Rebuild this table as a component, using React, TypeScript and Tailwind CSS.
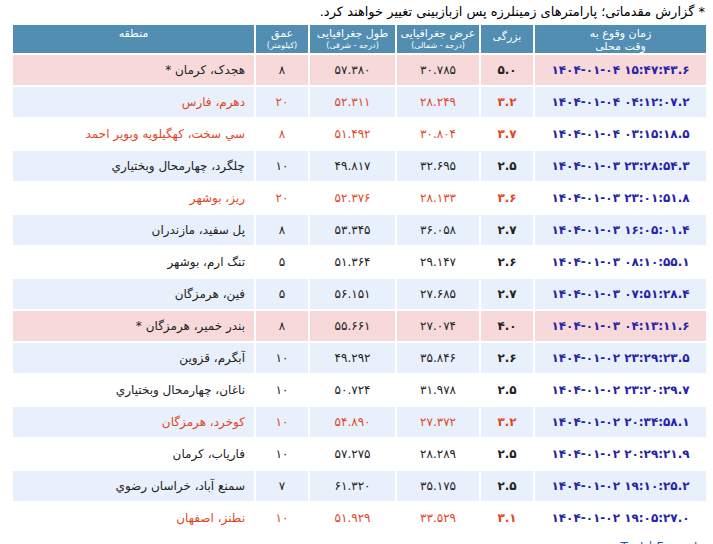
import React from 'react'

/* ردیف‌های جدول زمین‌لرزه‌ها */
type Quake = {
  region: string
  depth: string
  lon: string
  lat: string
  mag: string
  time: string
}

const QUAKES: Quake[] = [
  { region: 'هجدک، کرمان *', depth: '۸', lon: '۵۷.۳۸۰', lat: '۳۰.۷۸۵', mag: '۵.۰', time: '۱۴۰۴-۰۱-۰۴ ۱۵:۴۷:۴۳.۶' },
  { region: 'دهرم، فارس', depth: '۲۰', lon: '۵۲.۳۱۱', lat: '۲۸.۲۴۹', mag: '۳.۲', time: '۱۴۰۴-۰۱-۰۴ ۰۴:۱۲:۰۷.۲' },
  { region: 'سي سخت، كهگيلويه وبوير احمد', depth: '۸', lon: '۵۱.۴۹۲', lat: '۳۰.۸۰۴', mag: '۳.۷', time: '۱۴۰۴-۰۱-۰۴ ۰۳:۱۵:۱۸.۵' },
  { region: 'چلگرد، چهارمحال وبختياري', depth: '۱۰', lon: '۴۹.۸۱۷', lat: '۳۲.۶۹۵', mag: '۲.۵', time: '۱۴۰۴-۰۱-۰۳ ۲۳:۲۸:۵۴.۳' },
  { region: 'ريز، بوشهر', depth: '۲۰', lon: '۵۲.۳۷۶', lat: '۲۸.۱۳۳', mag: '۳.۶', time: '۱۴۰۴-۰۱-۰۳ ۲۳:۰۱:۵۱.۸' },
  { region: 'پل سفيد، مازندران', depth: '۸', lon: '۵۳.۳۴۵', lat: '۳۶.۰۵۸', mag: '۲.۷', time: '۱۴۰۴-۰۱-۰۳ ۱۶:۰۵:۰۱.۴' },
  { region: 'تنگ ارم، بوشهر', depth: '۵', lon: '۵۱.۳۶۴', lat: '۲۹.۱۴۷', mag: '۲.۶', time: '۱۴۰۴-۰۱-۰۳ ۰۸:۱۰:۵۵.۱' },
  { region: 'فين، هرمزگان', depth: '۵', lon: '۵۶.۱۵۱', lat: '۲۷.۶۸۵', mag: '۲.۷', time: '۱۴۰۴-۰۱-۰۳ ۰۷:۵۱:۲۸.۴' },
  { region: 'بندر خمير، هرمزگان *', depth: '۸', lon: '۵۵.۶۶۱', lat: '۲۷.۰۷۴', mag: '۴.۰', time: '۱۴۰۴-۰۱-۰۳ ۰۴:۱۳:۱۱.۶' },
  { region: 'آبگرم، قزوين', depth: '۱۰', lon: '۴۹.۲۹۲', lat: '۳۵.۸۴۶', mag: '۲.۶', time: '۱۴۰۴-۰۱-۰۲ ۲۳:۲۹:۲۳.۵' },
  { region: 'ناغان، چهارمحال وبختياري', depth: '۱۰', lon: '۵۰.۷۲۴', lat: '۳۱.۹۷۸', mag: '۲.۵', time: '۱۴۰۴-۰۱-۰۲ ۲۳:۲۰:۲۹.۷' },
  { region: 'كوخرد، هرمزگان', depth: '۱۰', lon: '۵۴.۸۹۰', lat: '۲۷.۳۷۲', mag: '۳.۲', time: '۱۴۰۴-۰۱-۰۲ ۲۰:۳۴:۵۸.۱' },
  { region: 'فارياب، كرمان', depth: '۱۰', lon: '۵۷.۲۷۵', lat: '۲۸.۲۸۹', mag: '۲.۵', time: '۱۴۰۴-۰۱-۰۲ ۲۰:۲۹:۲۱.۹' },
  { region: 'سمنع آباد، خراسان رضوي', depth: '۷', lon: '۶۱.۳۲۰', lat: '۳۵.۱۷۵', mag: '۲.۵', time: '۱۴۰۴-۰۱-۰۲ ۱۹:۱۰:۲۵.۲' },
  { region: 'نطنز، اصفهان', depth: '۱۰', lon: '۵۱.۹۲۹', lat: '۳۳.۵۲۹', mag: '۳.۱', time: '۱۴۰۴-۰۱-۰۲ ۱۹:۰۵:۲۷.۰' },
]

// ستون‌ها از راست به چپ: زمان، بزرگی، عرض، طول، عمق، منطقه
const COLS = 'grid grid-cols-[171px_52px_82px_85px_52px_241px] gap-x-[2px]'

function rowBg(q: Quake, i: number) {
  if (q.region.includes('*')) return 'bg-[#f7d9da]'
  return i % 2 === 1 ? 'bg-[#e8f0fb]' : 'bg-white'
}

export default function App() {
  return (
    <div
      dir="rtl"
      className="w-[713px] h-[544px] overflow-hidden bg-white text-[#222]"
      style={{ fontFamily: '"DejaVu Sans", "Liberation Sans", sans-serif' }}
    >
      {/* یادداشت بالای جدول */}
      <div className="h-[25px] pr-[8px] pt-[3px] text-[13px] leading-[17px] text-black">
        * گزارش مقدماتی؛ پارامترهای زمینلرزه پس ازبازبینی تغییر خواهند کرد.
      </div>

      <div className="w-[693px] mr-[7px] flex flex-col gap-y-[2px]">
        {/* سرستون‌ها */}
        <div className={`${COLS} h-[28px] text-white text-[11px] leading-[13px]`}>
          <div className="bg-[#528db2] flex flex-col items-center pt-[2px]">
            <span>زمان وقوع به</span>
            <span>وقت محلی</span>
          </div>
          <div className="bg-[#528db2] flex flex-col items-center pt-[5px]">
            <span>بزرگی</span>
          </div>
          <div className="bg-[#528db2] flex flex-col items-center pt-[2px]">
            <span>عرض جغرافیایی</span>
            <span className="text-[8px] leading-[11px]">(درجه - شمالی)</span>
          </div>
          <div className="bg-[#528db2] flex flex-col items-center pt-[2px]">
            <span>طول جغرافیایی</span>
            <span className="text-[8px] leading-[11px]">(درجه - شرقی)</span>
          </div>
          <div className="bg-[#528db2] flex flex-col items-center pt-[2px]">
            <span>عمق</span>
            <span className="text-[8px] leading-[11px]">(کیلومتر)</span>
          </div>
          <div className="bg-[#528db2] flex flex-col items-center pt-[2px]">
            <span>منطقه</span>
          </div>
        </div>

        {QUAKES.map((q, i) => {
          const red = !q.region.includes('*') && parseFloat(q.mag.replace(/[۰-۹]/g, d => String('۰۱۲۳۴۵۶۷۸۹'.indexOf(d)))) >= 3
          const txt = red ? 'text-[#e2461f]' : 'text-[#222]'
          const bg = rowBg(q, i)
          return (
            <div key={i} className={`${COLS} h-[30px] text-[12px]`}>
              <div className={`${bg} flex items-center justify-center font-bold text-[#2424a8] tracking-[0.5px]`}>
                <span dir="ltr">{q.time}</span>
              </div>
              <div className={`${bg} ${txt} flex items-center justify-center font-bold`}>{q.mag}</div>
              <div className={`${bg} ${txt} flex items-center justify-center`}>{q.lat}</div>
              <div className={`${bg} ${txt} flex items-center justify-center`}>{q.lon}</div>
              <div className={`${bg} ${txt} flex items-center justify-center`}>{q.depth}</div>
              <div className={`${bg} ${txt} flex items-center pr-[9px]`}>{q.region}</div>
            </div>
          )
        })}
      </div>

      {/* پیوند پایین (بریده شده) */}
      <div dir="ltr" className="mt-[5px] pr-[8px] text-right text-[12px] text-[#1f4fb5]">
        Text | Formats
      </div>
    </div>
  )
}
